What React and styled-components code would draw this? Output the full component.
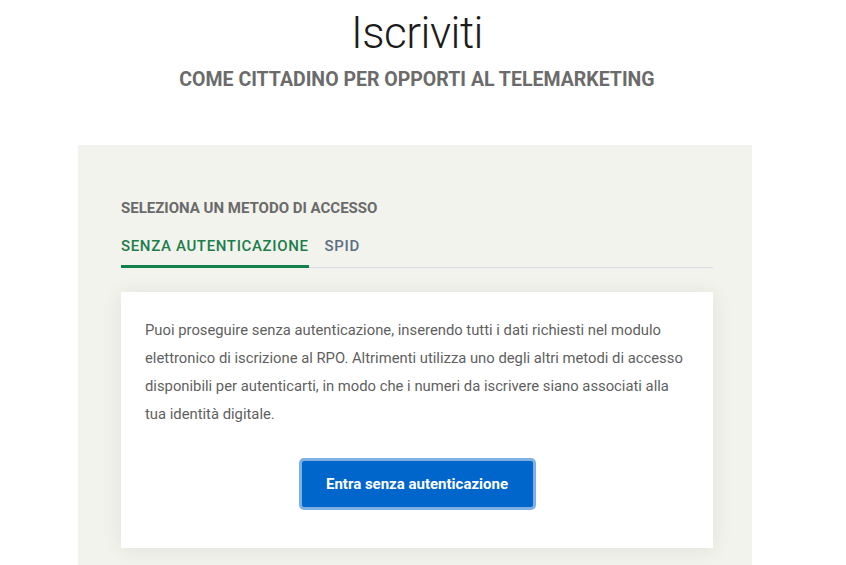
import React, { useState } from "react";
import styled, { createGlobalStyle } from "styled-components";

const GlobalStyle = createGlobalStyle`
  html, body {
    margin: 0;
    padding: 0;
    background: #ffffff;
    font-family: Roboto, "Liberation Sans", sans-serif;
  }
`;

const Page = styled.div`
  width: 846px;
  height: 565px;
  overflow: hidden;
  display: flex;
  flex-direction: column;
  align-items: center;
`;

const Header = styled.header`
  display: flex;
  flex-direction: column;
  align-items: center;
  padding-top: 3px;
  margin-right: 12px;
`;

const Title = styled.h1`
  margin: 0;
  font-size: 44px;
  line-height: 60px;
  font-weight: 300;
  letter-spacing: -0.5px;
  color: #1c1c1c;
`;

const Subtitle = styled.h2`
  margin: 5px 0 0;
  font-size: 19.5px;
  line-height: 24px;
  font-weight: 700;
  color: #6b6b6b;
`;

const Panel = styled.section`
  margin-top: 53px;
  margin-left: -16px;
  width: 674px;
  flex: 1;
  background: #f3f3ee;
  padding: 53px 39px 0 43px;
  box-sizing: border-box;
`;

const SectionLabel = styled.div`
  font-size: 15px;
  line-height: 20px;
  font-weight: 700;
  color: #6a6a6a;
`;

const TabBar = styled.div`
  display: flex;
  gap: 16px;
  margin-top: 18px;
  border-bottom: 1px solid #dcdce6;
`;

const Tab = styled.button`
  background: none;
  border: none;
  padding: 0 0 9px;
  font-family: inherit;
  font-size: 15px;
  line-height: 20px;
  font-weight: 500;
  letter-spacing: 0.65px;
  color: ${(p) => (p.$active ? "#1b7d4a" : "#5c6f82")};
  border-bottom: 3px solid ${(p) => (p.$active ? "#12804a" : "transparent")};
  margin-bottom: -1px;
  cursor: pointer;
`;

const Card = styled.div`
  margin-top: 24px;
  background: #ffffff;
  box-shadow: 0 2px 20px rgba(0, 0, 0, 0.08);
  padding: 24px 24px 38px;
  display: flex;
  flex-direction: column;
  align-items: center;
`;

const Text = styled.p`
  margin: 0;
  align-self: stretch;
  font-size: 14.8px;
  line-height: 28px;
  font-weight: 400;
  color: #5f5f5f;
`;

const Button = styled.button`
  margin-top: 30px;
  width: 237px;
  height: 52px;
  background: #0066cc;
  color: #ffffff;
  border: 3px solid #7fb0e3;
  border-radius: 5px;
  font-family: inherit;
  font-size: 15px;
  font-weight: 700;
  cursor: pointer;
`;

export default function App() {
  const [tab, setTab] = useState("senza");
  return (
    <Page>
      <GlobalStyle />
      <Header>
        <Title>Iscriviti</Title>
        <Subtitle>COME CITTADINO PER OPPORTI AL TELEMARKETING</Subtitle>
      </Header>
      <Panel>
        <SectionLabel>SELEZIONA UN METODO DI ACCESSO</SectionLabel>
        <TabBar>
          <Tab $active={tab === "senza"} onClick={() => setTab("senza")}>
            SENZA AUTENTICAZIONE
          </Tab>
          <Tab $active={tab === "spid"} onClick={() => setTab("spid")}>
            SPID
          </Tab>
        </TabBar>
        <Card>
          <Text>
            Puoi proseguire senza autenticazione, inserendo tutti i dati richiesti nel modulo
            elettronico di iscrizione al RPO. Altrimenti utilizza uno degli altri metodi di accesso
            disponibili per autenticarti, in modo che i numeri da iscrivere siano associati alla
            tua identità digitale.
          </Text>
          <Button>Entra senza autenticazione</Button>
        </Card>
      </Panel>
    </Page>
  );
}
